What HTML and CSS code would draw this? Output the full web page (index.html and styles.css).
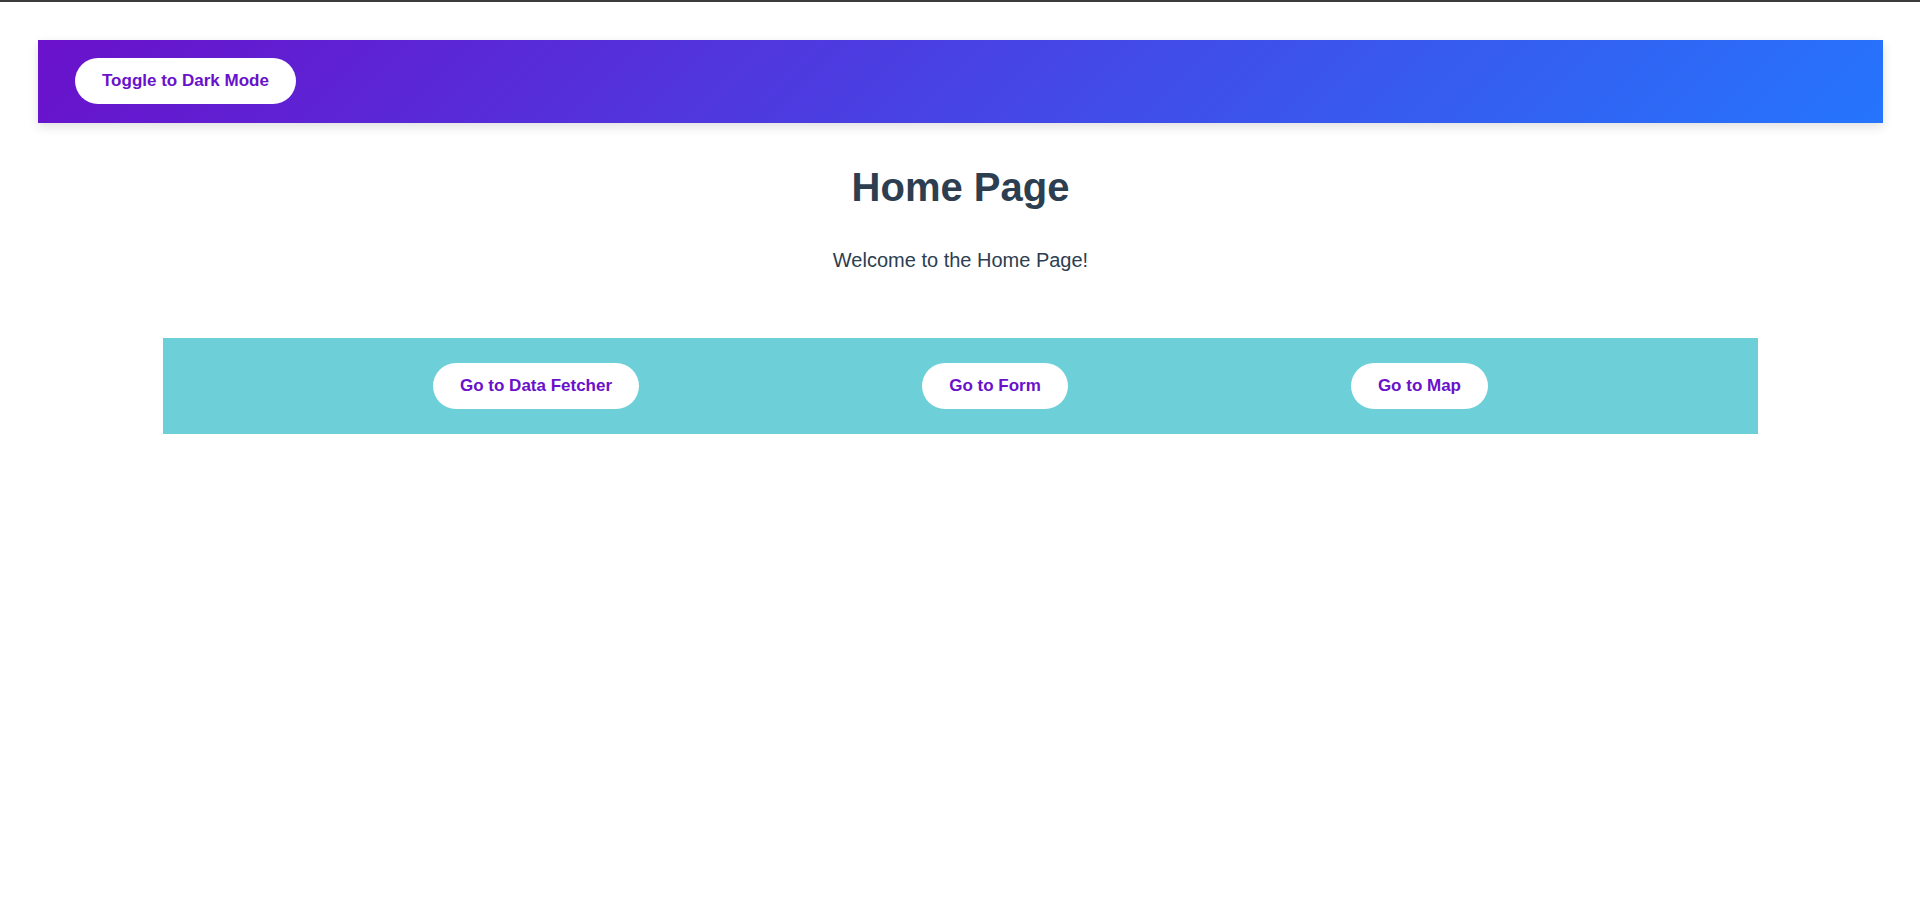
FILE: index.html
```html
<!DOCTYPE html>
<html lang="en">
<head>
<meta charset="utf-8">
<title>Home Page</title>
<link rel="stylesheet" href="styles.css">
</head>
<body>
  <div class="app">
    <header class="topbar">
      <button class="pill">Toggle to Dark Mode</button>
    </header>
    <main class="home">
      <h1 class="title">Home Page</h1>
      <p class="welcome">Welcome to the Home Page!</p>
      <nav class="links">
        <a class="pill" href="#">Go to Data Fetcher</a>
        <a class="pill" href="#">Go to Form</a>
        <a class="pill" href="#">Go to Map</a>
      </nav>
    </main>
  </div>
</body>
</html>
```
FILE: styles.css
```css
html, body {
  margin: 0;
  padding: 0;
  background: #ffffff;
}

body {
  border-top: 2px solid #3c3c3c;
  font-family: "Liberation Sans", Arial, sans-serif;
  color: #2c3e50;
}

.app {
  padding: 38px 37px 0 38px;
}

.topbar {
  display: flex;
  align-items: center;
  padding: 18px 37px 19px;
  background: linear-gradient(135deg, #6a11cb 0%, #2575fc 100%);
  box-shadow: 0 4px 10px rgba(0, 0, 0, 0.12);
}

.pill {
  display: inline-block;
  border: none;
  margin: 0;
  background: #ffffff;
  color: #6a11cb;
  font-family: "Liberation Sans", Arial, sans-serif;
  font-size: 17px;
  font-weight: bold;
  line-height: 20px;
  padding: 13px 27px;
  border-radius: 25px;
  text-decoration: none;
  cursor: pointer;
}

.home {
  text-align: center;
}

.title {
  margin: 41px 0 0;
  font-size: 40px;
  line-height: 46px;
  font-weight: bold;
  color: #2c3e50;
}

.welcome {
  margin: 39px 0 0;
  font-size: 20px;
  line-height: 23px;
  color: #2c3e50;
}

.links {
  display: flex;
  justify-content: space-between;
  align-items: center;
  margin: 66px 125px 0;
  padding: 25px 270px 25px;
  background: #6dd0d8;
}
```
